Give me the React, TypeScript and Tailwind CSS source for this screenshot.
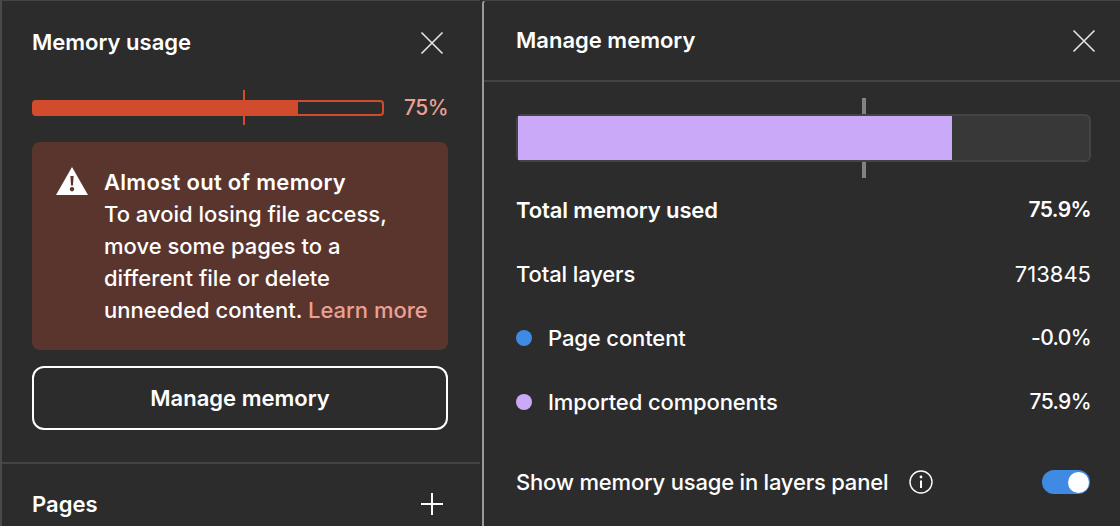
import React from "react";

function CloseIcon() {
  return (
    <svg width="24" height="24" viewBox="0 0 24 24" fill="none" stroke="#e6e6e6" strokeWidth="1.6">
      <path d="M1.5 1.5 L22.5 22.5 M22.5 1.5 L1.5 22.5" />
    </svg>
  );
}

function Row({ dot, label, value, bold, valueClass }: { dot?: string; label: string; value: string; bold?: boolean; valueClass: string }) {
  return (
    <div className={`flex h-[64px] items-center justify-between text-[22px] text-white ${bold ? "font-semibold" : "font-medium"}`}>
      <div className="flex items-center tracking-[-0.12px]">
        {dot && <span className={`mr-[16px] h-[16px] w-[16px] rounded-full ${dot}`} />}
        <span>{label}</span>
      </div>
      <span className={valueClass}>{value}</span>
    </div>
  );
}

export default function App() {
  const pct = "text-[21px] tracking-[-0.6px]";
  return (
    <div className="flex h-[526px] w-[1120px] overflow-hidden bg-[#2c2c2c] font-['Inter',sans-serif] text-white">
      <section className="flex h-full w-[480px] shrink-0 flex-col border-t border-l-2 border-t-[#444444] border-l-[#4a4a4a]">
        <header className="flex h-[83px] shrink-0 items-center justify-between pr-[36px] pl-[30px]">
          <h2 className="text-[22px] font-semibold">Memory usage</h2>
          <CloseIcon />
        </header>
        <div className="mt-[6px] flex h-[36px] shrink-0 items-center pl-[30px]">
          <div className="relative h-[16px] w-[352px] rounded-[4px] border-2 border-[#d04c2c]">
            <div className="h-full w-[264px] bg-[#d04c2c]" />
            <span className="absolute top-[-12px] left-[209px] h-[35px] w-[2px] bg-[#d04c2c]" />
          </div>
          <span className="ml-[20px] text-[21px] font-medium tracking-[-0.5px] text-[#eaa193]">75%</span>
        </div>
        <div className="mt-[16px] mr-[32px] ml-[30px] flex h-[208px] shrink-0 rounded-[8px] bg-[#5a352d] pt-[24px] pl-[24px]">
          <svg width="32" height="28" viewBox="0 0 32 28" className="mt-[1px] shrink-0">
            <path fillRule="evenodd" fill="#ffffff" d="M16 0 L32 28 L0 28 Z M14.4 9 L17.6 9 L17 18.5 L15 18.5 Z M16 20 a2.2 2.2 0 1 0 0.01 0 Z" />
          </svg>
          <p className="ml-[16px] text-[22px] leading-[32px] font-medium">
            <span className="block font-semibold tracking-[0.3px]">Almost out of memory</span>
            To avoid losing file access,<br />
            move some pages to a<br />
            different file or delete<br />
            unneeded content. <span className="text-[#eaa193]">Learn more</span>
          </p>
        </div>
        <button className="mt-[16px] mr-[32px] ml-[30px] flex h-[64px] shrink-0 items-center justify-center rounded-[12px] border-2 border-white text-[22px] font-semibold">
          Manage memory
        </button>
        <div className="mt-[32px] h-[2px] shrink-0 bg-[#444444]" />
        <div className="flex h-[80px] shrink-0 items-center justify-between pr-[36px] pl-[30px]">
          <h2 className="text-[22px] font-semibold">Pages</h2>
          <svg width="24" height="24" viewBox="0 0 24 24" stroke="#ffffff" strokeWidth="2">
            <path d="M12 1 V23 M1 12 H23" />
          </svg>
        </div>
      </section>
      <section className="ml-[2px] flex h-full flex-1 flex-col rounded-tl-[4px] border-t border-l-2 border-t-[#444444] border-l-[#9a9a9a]">
        <header className="flex h-[81px] shrink-0 items-center justify-between border-b-2 border-[#444444] pr-[24px] pl-[32px]">
          <h2 className="text-[22px] font-semibold">Manage memory</h2>
          <CloseIcon />
        </header>
        <div className="flex flex-1 flex-col pr-[29px] pl-[32px]">
          <div className="relative mt-[32px] h-[48px] w-[575px] shrink-0 rounded-[6px] border-2 border-[#444444] bg-[#383838]">
            <div className="h-full w-[434px] bg-[#c9a9f8]" />
            <span className="absolute top-[-18px] left-[344px] h-[16px] w-[4px] bg-[#828282]" />
            <span className="absolute bottom-[-18px] left-[344px] h-[16px] w-[4px] bg-[#828282]" />
          </div>
          <div className="mt-[16px]">
            <Row label="Total memory used" value="75.9%" bold valueClass={pct} />
            <Row label="Total layers" value="713845" valueClass="text-[22px] font-normal" />
            <Row dot="bg-[#3f8ae2]" label="Page content" value="-0.0%" valueClass={pct} />
            <Row dot="bg-[#c9a9f8]" label="Imported components" value="75.9%" valueClass={pct} />
          </div>
          <div className="mt-[16px] flex h-[64px] items-center justify-between text-[22px] font-medium">
            <div className="flex items-center tracking-[-0.2px]">
              <span>Show memory usage in layers panel</span>
              <svg width="24" height="24" viewBox="0 0 24 24" fill="none" className="ml-[21px]">
                <circle cx="12" cy="12" r="11" stroke="#ffffff" strokeWidth="1.4" />
                <path d="M12 10.5 V18" stroke="#ffffff" strokeWidth="2" />
                <circle cx="12" cy="7" r="1.4" fill="#ffffff" />
              </svg>
            </div>
            <div className="mr-[1px] flex h-[24px] w-[48px] items-center justify-end rounded-full bg-[#3f8ae2] pr-[1px]">
              <span className="h-[21px] w-[21px] rounded-full bg-white" />
            </div>
          </div>
        </div>
      </section>
    </div>
  );
}
